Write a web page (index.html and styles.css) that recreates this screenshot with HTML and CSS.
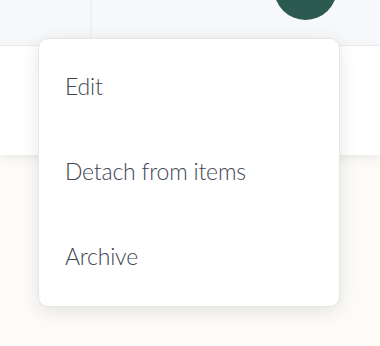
FILE: index.html
```html
<!DOCTYPE html>
<html>
<head>
<meta charset="utf-8">
<link rel="stylesheet" href="styles.css">
</head>
<body>
<div class="page">
  <header class="topbar">
    <div class="topbar-left"></div>
    <div class="topbar-right">
      <div class="avatar"></div>
    </div>
  </header>
  <section class="panel"></section>
  <main class="content"></main>
  <ul class="menu">
    <li class="menu-item">Edit</li>
    <li class="menu-item">Detach from items</li>
    <li class="menu-item">Archive</li>
  </ul>
</div>
</body>
</html>
```
FILE: styles.css
```css
* { box-sizing: border-box; }
html, body { margin: 0; padding: 0; }
body {
  width: 380px;
  height: 346px;
  overflow: hidden;
  background: #fcfbf7;
  font-family: Lato, "Noto Sans", sans-serif;
}
.page {
  position: relative;
  width: 380px;
  height: 346px;
  display: flex;
  flex-direction: column;
}
.topbar {
  height: 46px;
  display: flex;
  background: #f7f8fa;
  border-bottom: 1px solid #eceef0;
  overflow: hidden;
}
.topbar-left {
  width: 92px;
  height: 40px;
  border-right: 2px solid #eef0f3;
}
.topbar-right {
  flex: 1;
  display: flex;
  justify-content: flex-end;
  padding-right: 43px;
}
.avatar {
  width: 63px;
  height: 63px;
  border-radius: 50%;
  background: #2d5a50;
  margin-top: -43px;
}
.panel {
  height: 109px;
  background: #ffffff;
  box-shadow: 0 3px 10px rgba(0, 0, 0, 0.08);
  position: relative;
  z-index: 1;
}
.content {
  flex: 1;
  background: #fcfbf7;
}
.menu {
  position: absolute;
  z-index: 2;
  left: 38px;
  top: 38px;
  width: 302px;
  height: 269px;
  margin: 0;
  padding: 5px 0 0;
  list-style: none;
  background: #ffffff;
  border: 1px solid #e6e6e6;
  border-radius: 10px;
  box-shadow: 0 4px 18px rgba(0, 0, 0, 0.10);
}
.menu-item {
  height: 85px;
  line-height: 85px;
  padding-left: 26px;
  font-size: 23px;
  font-weight: 300;
  color: #3e4552;
  letter-spacing: -0.2px;
}
```
